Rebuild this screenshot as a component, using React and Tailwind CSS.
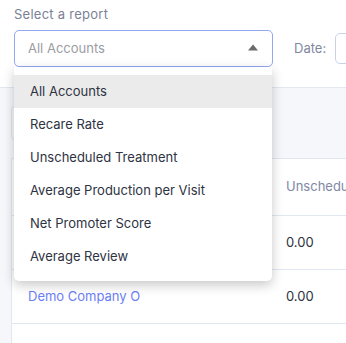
import { useState } from 'react';

const reports = [
    'All Accounts',
    'Recare Rate',
    'Unscheduled Treatment',
    'Average Production per Visit',
    'Net Promoter Score',
    'Average Review',
];

const rows = [
    { name: '', value: '0.00' },
    { name: 'Demo Company O', value: '0.00' },
    { name: '', value: '' },
];

export default function App() {
    const [selected] = useState('All Accounts');

    return (
        <div className="relative flex h-[343px] w-[346px] flex-col overflow-hidden bg-[#f5f7fb] font-['Inter',sans-serif] text-[13px]">
            {/* Report picker */}
            <div className="h-[88px] shrink-0 border-b border-[#e3e8f1] bg-white px-[14px] pt-[5px]">
                <p className="leading-[18px] tracking-[0.02em] text-[#7b8196]">Select a report</p>
                <div className="mt-[7px] flex items-center">
                    <div className="flex h-[37px] w-[259px] shrink-0 items-center justify-between rounded-[5px] border border-[#93a8f2] bg-white pl-[13px] pr-[13px]">
                        <span className="text-[#9b9da3]">{selected}</span>
                        <svg width="12" height="7" viewBox="0 0 12 7" className="mt-[-2px]">
                            <path d="M6 0.5 L11 6.5 L1 6.5 Z" fill="#6b6b6b" />
                        </svg>
                    </div>
                    <span className="ml-[21px] shrink-0 text-[#80879f]">Date:</span>
                    <div className="ml-[9px] h-[31px] w-[60px] shrink-0 rounded-[5px] border border-[#c9d3e8] bg-white" />
                </div>
            </div>

            {/* Filter strip */}
            <div className="h-[70px] shrink-0 pl-[11px] pt-[17px]">
                <div className="h-[36px] w-[200px] rounded-[5px] border border-[#dfe3ea] bg-[#f7f8fa]" />
            </div>

            {/* Table */}
            <div className="ml-[11px] flex-1 overflow-hidden border-l border-t border-[#e1e7f1] bg-white">
                <div className="grid h-[57px] grid-cols-[258px_1fr] items-center border-b border-[#e1e7f1]">
                    <span />
                    <span className="overflow-hidden whitespace-nowrap pl-4 text-[#8088a6]">Unscheduled Treatment</span>
                </div>
                {rows.map((row, i) => (
                    <div key={i} className="grid h-[54px] grid-cols-[258px_1fr] items-center border-b border-[#e1e7f1]">
                        <span className="pl-4 text-[#6c7ef5]">{row.name}</span>
                        <span className="pl-4 text-[#2b3140]">{row.value}</span>
                    </div>
                ))}
            </div>

            {/* Open dropdown menu */}
            <ul className="absolute left-[14px] top-[67px] w-[258px] rounded-b-[5px] bg-white py-[8px] shadow-[0_4px_12px_rgba(0,0,0,0.22)]">
                {reports.map((r) => (
                    <li
                        key={r}
                        className={`flex h-[33px] items-center pl-[16px] text-[#2e3342] ${r === selected ? 'bg-[#ebebeb]' : ''}`}
                    >
                        {r}
                    </li>
                ))}
            </ul>
        </div>
    );
}
